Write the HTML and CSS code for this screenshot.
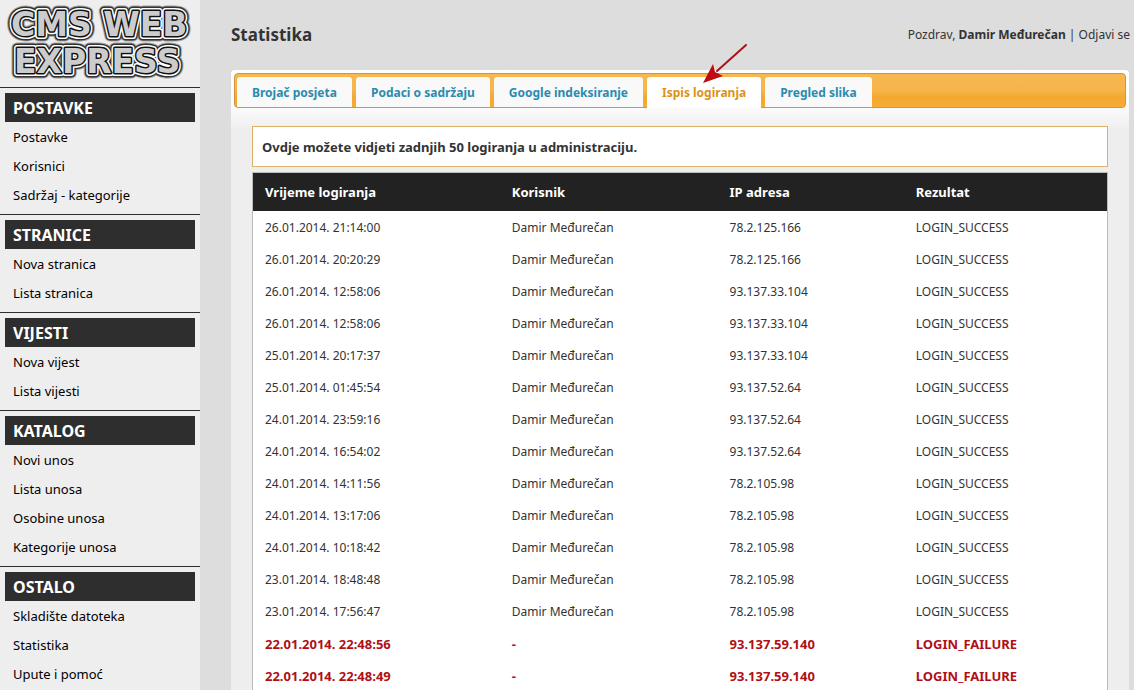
FILE: index.html
```html
<!DOCTYPE html>
<html lang="hr">
<head>
<meta charset="utf-8">
<title>Statistika</title>
<link rel="stylesheet" href="styles.css">
</head>
<body>
<div class="layout">
  <aside class="sidebar">
    <svg class="logo" viewBox="0 0 200 87" role="img" aria-label="CMS WEB EXPRESS">
      <defs>
        <g id="wordmark">
          <text x="11" y="36">CMS WEB</text>
          <text x="14" y="73">EXPRESS</text>
        </g>
      </defs>
      <use href="#wordmark" class="logo-glow"/>
      <use href="#wordmark" class="logo-edge"/>
      <use href="#wordmark" class="logo-rim"/>
      <use href="#wordmark" class="logo-line"/>
      <use href="#wordmark" class="logo-face"/>
    </svg>
    <nav>
      <section class="group">
        <h2>POSTAVKE</h2>
        <a href="#">Postavke</a>
        <a href="#">Korisnici</a>
        <a href="#">Sadržaj - kategorije</a>
      </section>
      <section class="group">
        <h2>STRANICE</h2>
        <a href="#">Nova stranica</a>
        <a href="#">Lista stranica</a>
      </section>
      <section class="group">
        <h2>VIJESTI</h2>
        <a href="#">Nova vijest</a>
        <a href="#">Lista vijesti</a>
      </section>
      <section class="group">
        <h2>KATALOG</h2>
        <a href="#">Novi unos</a>
        <a href="#">Lista unosa</a>
        <a href="#">Osobine unosa</a>
        <a href="#">Kategorije unosa</a>
      </section>
      <section class="group">
        <h2>OSTALO</h2>
        <a href="#">Skladište datoteka</a>
        <a href="#">Statistika</a>
        <a href="#">Upute i pomoć</a>
      </section>
    </nav>
  </aside>
  <main class="main">
    <header class="top">
      <h1>Statistika</h1>
      <p>Pozdrav, <b>Damir Međurečan</b> | <a href="#">Odjavi se</a></p>
    </header>
    <div class="panel">
      <nav class="tabs">
        <a href="#">Brojač posjeta</a>
        <a href="#">Podaci o sadržaju</a>
        <a href="#">Google indeksiranje</a>
        <a href="#" class="active" aria-current="page">Ispis logiranja
          <svg class="arrow" viewBox="0 0 46 42" aria-hidden="true">
            <path d="M43 1L14 27" stroke="#b01018" stroke-width="2" stroke-linecap="round"/>
            <path d="M0 39L10 20L12 28L20 32Z" fill="#c00c10"/>
          </svg>
        </a>
        <a href="#">Pregled slika</a>
      </nav>
      <div class="content">
        <p class="notice">Ovdje možete vidjeti zadnjih 50 logiranja u administraciju.</p>
        <table class="log">
          <colgroup><col class="time"><col class="user"><col class="ip"><col></colgroup>
          <thead><tr><th>Vrijeme logiranja</th><th>Korisnik</th><th>IP adresa</th><th>Rezultat</th></tr></thead>
          <tbody>
            <tr><td>26.01.2014. 21:14:00</td><td>Damir Međurečan</td><td>78.2.125.166</td><td>LOGIN_SUCCESS</td></tr>
            <tr><td>26.01.2014. 20:20:29</td><td>Damir Međurečan</td><td>78.2.125.166</td><td>LOGIN_SUCCESS</td></tr>
            <tr><td>26.01.2014. 12:58:06</td><td>Damir Međurečan</td><td>93.137.33.104</td><td>LOGIN_SUCCESS</td></tr>
            <tr><td>26.01.2014. 12:58:06</td><td>Damir Međurečan</td><td>93.137.33.104</td><td>LOGIN_SUCCESS</td></tr>
            <tr><td>25.01.2014. 20:17:37</td><td>Damir Međurečan</td><td>93.137.33.104</td><td>LOGIN_SUCCESS</td></tr>
            <tr><td>25.01.2014. 01:45:54</td><td>Damir Međurečan</td><td>93.137.52.64</td><td>LOGIN_SUCCESS</td></tr>
            <tr><td>24.01.2014. 23:59:16</td><td>Damir Međurečan</td><td>93.137.52.64</td><td>LOGIN_SUCCESS</td></tr>
            <tr><td>24.01.2014. 16:54:02</td><td>Damir Međurečan</td><td>93.137.52.64</td><td>LOGIN_SUCCESS</td></tr>
            <tr><td>24.01.2014. 14:11:56</td><td>Damir Međurečan</td><td>78.2.105.98</td><td>LOGIN_SUCCESS</td></tr>
            <tr><td>24.01.2014. 13:17:06</td><td>Damir Međurečan</td><td>78.2.105.98</td><td>LOGIN_SUCCESS</td></tr>
            <tr><td>24.01.2014. 10:18:42</td><td>Damir Međurečan</td><td>78.2.105.98</td><td>LOGIN_SUCCESS</td></tr>
            <tr><td>23.01.2014. 18:48:48</td><td>Damir Međurečan</td><td>78.2.105.98</td><td>LOGIN_SUCCESS</td></tr>
            <tr><td>23.01.2014. 17:56:47</td><td>Damir Međurečan</td><td>78.2.105.98</td><td>LOGIN_SUCCESS</td></tr>
            <tr class="failure"><td>22.01.2014. 22:48:56</td><td>-</td><td>93.137.59.140</td><td>LOGIN_FAILURE</td></tr>
            <tr class="failure"><td>22.01.2014. 22:48:49</td><td>-</td><td>93.137.59.140</td><td>LOGIN_FAILURE</td></tr>
          </tbody>
        </table>
      </div>
    </div>
  </main>
</div>
</body>
</html>
```
FILE: styles.css
```css
* { box-sizing: border-box; }
body {
  margin: 0;
  background: #ddd;
  color: #333;
  font: 13px/18px "Noto Sans", "Open Sans", sans-serif;
}
h1, h2, p { margin: 0; }
a { color: inherit; text-decoration: none; }
.layout { display: flex; height: 100vh; overflow: hidden; }

.sidebar { flex: 0 0 200px; background: #eee; color: #000; }
.logo { display: block; width: 100%; font: bold 33px "DejaVu Sans", sans-serif; }
.logo use { stroke-linejoin: round; }
.logo-glow { fill: #888; stroke: #aaa; stroke-width: 11; }
.logo-edge { fill: #333; stroke: #333; stroke-width: 9; }
.logo-rim { fill: #fff; stroke: #fff; stroke-width: 6; }
.logo-line { fill: #111; stroke: #111; stroke-width: 3; }
.logo-face { fill: #ccc; }
.group { border-top: 1px solid #2e2e2e; padding: 5px; }
.group h2 {
  background: #2e2e2e;
  color: #fff;
  font-size: 16px;
  line-height: 27px;
  padding: 2px 8px 0;
}
.group a { display: block; line-height: 27px; padding: 2px 8px 0; }

.main { flex: 1; min-width: 0; padding: 0 5px 0 31px; }
.top {
  display: flex;
  justify-content: space-between;
  align-items: center;
  height: 70px;
  margin-right: -1px;
  font-size: 12px;
}
.top h1 { font-size: 17px; line-height: 24px; }

.panel {
  min-height: 100%;
  padding: 3px;
  border-radius: 4px 4px 0 0;
  background: #eee linear-gradient(#fff, #fafafa 40px, #eee 60px) no-repeat 0 0 / 100% 60px;
}
.tabs {
  display: flex;
  gap: 4px;
  height: 35px;
  padding: 3px 2px 0;
  border: 1px solid #cf9542;
  border-radius: 4px;
  background: linear-gradient(#f8b850, #f6b44a 50%, #f4a830 70%, #f5ad35);
}
.tabs a {
  padding: 2px 15px 0;
  border-radius: 3px 3px 0 0;
  background: #f9f9f9;
  color: #2a8bb0;
  font-size: 12px;
  font-weight: bold;
  line-height: 28px;
}
.tabs .active {
  position: relative;
  height: 31px;
  background: #fff;
  color: #dc9218;
}
.arrow {
  position: absolute;
  right: 12px;
  bottom: 22px;
  width: 46px;
  height: 42px;
  fill: none;
}
.content { padding: 18px; }
.notice {
  padding: 11px 9px 10px;
  border: 1px solid #dcb068;
  background: #fff;
  font-weight: bold;
}
.log {
  width: 100%;
  margin-top: 5px;
  border: 1px solid #bbb;
  border-spacing: 0;
  table-layout: fixed;
  background: #fff;
}
.time { width: 28.9%; }
.user { width: 25.5%; }
.ip { width: 21.8%; }
.log th, .log td { padding: 0 12px; text-align: left; }
.log th { height: 38px; background: #222; color: #fff; }
.log td { height: 32px; padding-top: 2px; font-size: 12px; }
.log .failure td { color: #b01015; font-size: 13px; font-weight: bold; }
```
